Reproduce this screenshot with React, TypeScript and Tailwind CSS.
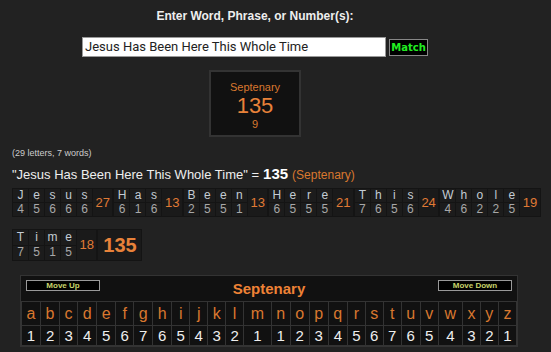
import React from "react";

const V: Record<string, number> = {
  a: 1, b: 2, c: 3, d: 4, e: 5, f: 6, g: 7, h: 6, i: 5, j: 4, k: 3, l: 2, m: 1,
  n: 1, o: 2, p: 3, q: 4, r: 5, s: 6, t: 7, u: 6, v: 5, w: 4, x: 3, y: 2, z: 1,
};

const row1 = ["Jesus", "Has", "Been", "Here", "This", "Whole"];
const row2 = ["Time"];
const alphabet = "abcdefghijklmnopqrstuvwxyz".split("");

function Word({ w }: { w: string }) {
  const letters = w.split("");
  const sum = letters.reduce((s, c) => s + V[c.toLowerCase()], 0);
  return (
    <table className="border-collapse">
      <tbody>
        <tr>
          {letters.map((c, i) => (
            <td
              key={i}
              className="h-[14px] w-[16px] border border-[#141414] bg-[#1c1c1c] p-0 text-center text-[12px] leading-[13px] text-[#c4ccd4]"
            >
              {c}
            </td>
          ))}
          <td
            rowSpan={2}
            className="border border-[#141414] bg-[#1a1a1a] px-[2.5px] text-center text-[13px] text-[#e07a35]"
          >
            {sum}
          </td>
        </tr>
        <tr>
          {letters.map((c, i) => (
            <td
              key={i}
              className="h-[14px] w-[16px] border border-[#141414] bg-[#1c1c1c] p-0 text-center text-[12px] leading-[13px] text-[#a8a8a8]"
            >
              {V[c.toLowerCase()]}
            </td>
          ))}
        </tr>
      </tbody>
    </table>
  );
}

export default function App() {
  return (
    <div className="min-h-screen bg-[#222222] font-['Liberation_Sans',Arial,sans-serif] text-[#eeeeee]">
      <div className="w-[510px]">
        <div className="pt-[9px] text-center text-[12px] font-bold leading-[14px]">
          Enter Word, Phrase, or Number(s):
        </div>
        <div className="mt-[14px] flex items-center pl-[82px]">
          <div className="flex h-[20px] w-[304px] items-center border border-[#999] bg-white px-[2px] font-['Roboto',sans-serif] text-[13px] text-[#222]">
            Jesus Has Been Here This Whole Time
          </div>
          <div className="ml-[3px] flex h-[17px] w-[39px] items-center justify-center border border-[#888] bg-black font-['DejaVu_Sans',sans-serif] text-[10px] font-bold text-[#22ee22]">
            Match
          </div>
        </div>
        <div className="mt-[13px] flex justify-center">
          <div className="flex h-[67px] w-[92px] flex-col items-center border-2 border-[#333] bg-[#111]">
            <div className="mt-[9px] text-[11px] leading-[13px] text-[#d9782f]">Septenary</div>
            <div className="mt-[1px] text-[22px] leading-[22px] text-[#e8823a]">135</div>
            <div className="mt-[1px] text-[11px] leading-[13px] text-[#d9782f]">9</div>
          </div>
        </div>
      </div>
      <div className="pl-[12px]">
        <div className="mt-[10px] text-[9px] leading-[12px] text-[#cccccc]">(29 letters, 7 words)</div>
        <div className="mt-[7px] flex items-baseline leading-[16px]">
          <span className="text-[13px] text-[#eeeeee]">"Jesus Has Been Here This Whole Time" = </span>
          <span className="ml-[4px] text-[15px] font-bold text-white">135</span>
          <span className="ml-[4px] text-[12px] text-[#d9782f]">(Septenary)</span>
        </div>
        <div className="mt-[5px] flex">
          {row1.map((w) => (
            <Word key={w} w={w} />
          ))}
        </div>
        <div className="mt-[12px] flex">
          {row2.map((w) => (
            <Word key={w} w={w} />
          ))}
          <div className="flex w-[45px] items-center justify-center border border-[#141414] bg-[#1a1a1a] text-[20px] font-bold text-[#e8823a]">
            135
          </div>
        </div>
      </div>
      <div className="ml-[20px] mt-[14px] w-[498px] border border-[#333] bg-[#111]">
        <div className="flex h-[25px] items-start justify-between px-[5px]">
          <div className="mt-[4px] flex h-[11px] w-[74px] items-center justify-center border border-[#999] bg-black text-[8px] font-bold leading-none text-[#c8d46a]">
            Move Up
          </div>
          <div className="mt-[3px] text-[15px] font-bold leading-[20px] text-[#ee8236]">Septenary</div>
          <div className="mt-[4px] flex h-[11px] w-[74px] items-center justify-center border border-[#999] bg-black text-[8px] font-bold leading-none text-[#c8d46a]">
            Move Down
          </div>
        </div>
        <table className="w-full border-collapse">
          <tbody>
            <tr>
              {alphabet.map((c) => (
                <td
                  key={c}
                  className="h-[24px] border border-[#333] p-0 text-center text-[16px] leading-none text-[#d9782f]"
                >
                  {c}
                </td>
              ))}
            </tr>
            <tr>
              {alphabet.map((c) => (
                <td
                  key={c}
                  className="h-[20px] border border-[#333] p-0 text-center text-[15px] leading-none text-[#eeeeee]"
                >
                  {V[c]}
                </td>
              ))}
            </tr>
          </tbody>
        </table>
      </div>
    </div>
  );
}
